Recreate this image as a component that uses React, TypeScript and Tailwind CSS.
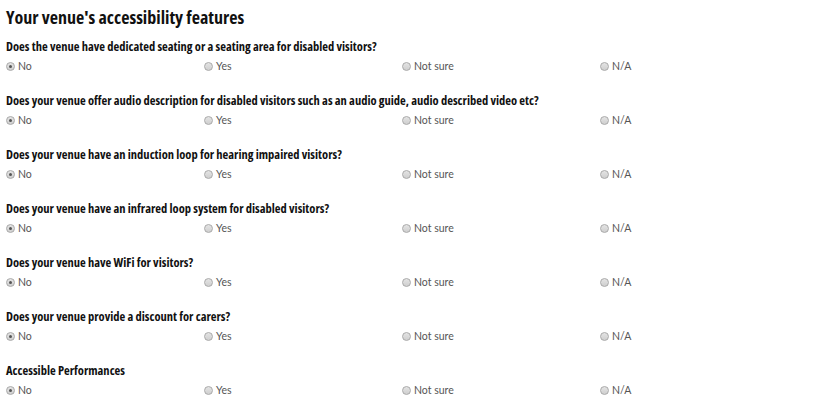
import React from "react";

const questions = [
  "Does the venue have dedicated seating or a seating area for disabled visitors?",
  "Does your venue offer audio description for disabled visitors such as an audio guide, audio described video etc?",
  "Does your venue have an induction loop for hearing impaired visitors?",
  "Does your venue have an infrared loop system for disabled visitors?",
  "Does your venue have WiFi for visitors?",
  "Does your venue provide a discount for carers?",
  "Accessible Performances",
];

const options = ["No", "Yes", "Not sure", "N/A"];

function Radio({ checked }: { checked: boolean }) {
  return (
    <span className="flex h-[9px] w-[9px] items-center justify-center rounded-full border border-[#a9a9a9] bg-gradient-to-b from-[#e4e4e4] to-[#cfcfcf]">
      {checked && <span className="h-[3px] w-[3px] rounded-full bg-[#555]" />}
    </span>
  );
}

export default function App() {
  return (
    <div className="h-[413px] w-[822px] bg-white px-[6px] pt-[6px] text-[#222]">
      <h2 className="font-['Open_Sans','DejaVu_Sans_Condensed',sans-serif] font-stretch-condensed text-[18px] font-bold leading-[22px] text-[#111]">
        Your venue's accessibility features
      </h2>
      <div className="mt-[11px] flex flex-col gap-[19px]">
        {questions.map((q, qi) => (
          <div key={qi}>
            <p className="font-['Open_Sans','DejaVu_Sans_Condensed',sans-serif] font-stretch-condensed text-[12.5px] font-bold leading-[16px] text-[#111]">
              {q}
            </p>
            <div className="mt-[3px] grid grid-cols-[198px_198px_198px_198px]">
              {options.map((o, oi) => (
                <label key={o} className="flex items-center gap-[3px]">
                  <Radio checked={oi === 0} />
                  <span className="font-['Lato','Open_Sans',sans-serif] text-[10.5px] leading-[16px] text-[#555]">
                    {o}
                  </span>
                </label>
              ))}
            </div>
          </div>
        ))}
      </div>
    </div>
  );
}
